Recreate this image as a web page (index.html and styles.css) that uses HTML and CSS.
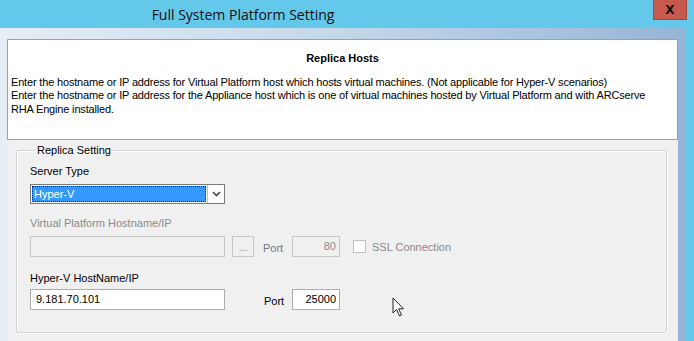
FILE: index.html
```html
<!DOCTYPE html>
<html lang="en">
<head>
    <meta charset="UTF-8">
    <title>Full System Platform Setting</title>
    <link rel="stylesheet" href="styles.css">
</head>
<body>
    <div class="window">
        <div class="titlebar">
            <div class="title">Full System Platform Setting</div>
            <div class="close">X</div>
        </div>
        <div class="frame">
            <div class="header">
                <div class="header-title">Replica Hosts</div>
                <p>Enter the hostname or IP address for Virtual Platform host which hosts virtual machines. (Not applicable for Hyper-V scenarios)</p>
                <p>Enter the hostname or IP address for the Appliance host which is one of virtual machines hosted by Virtual Platform and with ARCserve RHA Engine installed.</p>
            </div>
            <div class="content">
                <fieldset class="group">
                    <legend>Replica Setting</legend>
                    <div class="label first">Server Type</div>
                    <div class="combo">
                        <div class="combo-value"><span>Hyper-V</span></div>
                        <div class="combo-btn">
                            <svg width="9" height="6" viewBox="0 0 9 6"><path d="M1 1 L4.5 4.5 L8 1" fill="none" stroke="#444" stroke-width="1.6"/></svg>
                        </div>
                    </div>
                    <div class="label disabled">Virtual Platform Hostname/IP</div>
                    <div class="row">
                        <div class="textbox host disabled"></div>
                        <div class="browse">...</div>
                        <div class="port-label muted">Port</div>
                        <div class="textbox port disabled">80</div>
                        <div class="check"></div>
                        <div class="check-label disabled">SSL Connection</div>
                    </div>
                    <div class="label spaced">Hyper-V HostName/IP</div>
                    <div class="row tight">
                        <div class="textbox host">9.181.70.101</div>
                        <div class="port-label">Port</div>
                        <div class="textbox port">25000</div>
                    </div>
                </fieldset>
            </div>
        </div>
        <svg class="cursor" width="14" height="21" viewBox="0 0 14 21"><path d="M1 1 L1 16 L4.5 12.5 L7.5 19 L9.5 18 L6.7 11.8 L11.5 11.8 Z" fill="#fff" stroke="#222" stroke-width="1" stroke-linejoin="round"/></svg>
    </div>
</body>
</html>
```

FILE: styles.css
```css
* {
    margin: 0;
    padding: 0;
    box-sizing: border-box;
}
body {
    width: 694px;
    height: 341px;
    overflow: hidden;
    font-family: 'Liberation Sans', Arial, sans-serif;
    font-size: 11px;
    color: #000;
}
.window {
    position: relative;
    height: 341px;
    background: #63c8ea;
    display: flex;
    flex-direction: column;
}
.titlebar {
    height: 28px;
    display: flex;
    justify-content: center;
    align-items: center;
    position: relative;
}
.title {
    font-family: 'Open Sans', 'Noto Sans', sans-serif;
    font-size: 14px;
    color: #111;
    margin-left: -208px;
    padding-top: 1px;
}
.close {
    position: absolute;
    top: 0;
    right: 7px;
    width: 34px;
    height: 20px;
    background: #c75a4c;
    border: 1px solid #a84538;
    border-top: none;
    color: #111;
    font-family: 'DejaVu Sans', sans-serif;
    font-weight: bold;
    font-size: 12px;
    display: flex;
    justify-content: center;
    align-items: center;
}
.frame {
    flex: 1;
    margin-right: 8px;
    padding: 11px 8px 0 7px;
    background: linear-gradient(to right, #e6eef6, #c3d7e9 50%, #95b5d7);
    display: flex;
    flex-direction: column;
}
.header {
    background: #fff;
    border: 1px solid #a0a0a0;
    height: 101px;
    padding: 12px 28px 0 3px;
    line-height: 13.5px;
    letter-spacing: -0.17px;
}
.header-title {
    font-weight: bold;
    text-align: center;
    margin-bottom: 10px;
    margin-right: -25px;
    letter-spacing: 0;
}
.content {
    flex: 1;
    background: #f0f0f0;
    padding: 4px 11px 8px 9px;
}
.group {
    height: 100%;
    border: 1px solid #d5d5d5;
    box-shadow: inset 1px 1px 0 #fff, 1px 1px 0 #fff;
    border-radius: 2px;
    padding: 0 0 0 13px;
}
.group legend {
    margin-left: 5px;
    padding: 0 2px;
    font-size: 11px;
}
.label {
    margin-top: 13px;
    height: 14px;
}
.label.first {
    margin-top: 9px;
}
.label.spaced {
    margin-top: 15px;
}
.disabled {
    color: #8a8a8a;
}
.muted {
    color: #6e7a88;
}
.combo {
    margin-top: 5px;
    width: 195px;
    height: 20px;
    border: 1px solid #7a7a7a;
    display: flex;
    background: #fff;
}
.combo-value {
    flex: 1;
    padding: 1px;
}
.combo-value span {
    display: block;
    height: 100%;
    background: #3399ff;
    color: #fff;
    border: 1px dotted #222;
    padding-left: 1px;
    line-height: 15px;
}
.combo-btn {
    width: 17px;
    border-left: 1px solid #bdbdbd;
    display: flex;
    justify-content: center;
    align-items: center;
}
.row {
    margin-top: 5px;
    display: flex;
    align-items: center;
    height: 21px;
}
.row.tight {
    margin-top: 3px;
}
.textbox {
    height: 21px;
    border: 1px solid #adadad;
    background: #fff;
    padding: 3px 5px;
    line-height: 13px;
}
.textbox.disabled {
    background: #f0f0f0;
    border-color: #c8c8c8;
}
.host {
    width: 195px;
}
.browse {
    width: 22px;
    height: 21px;
    margin-left: 7px;
    border: 1px solid #c8c8c8;
    color: #8a8a8a;
    text-align: center;
    line-height: 22px;
    font-size: 10px;
}
.port-label {
    margin-left: 9px;
    width: 29px;
    padding-top: 2px;
}
.row .host + .port-label {
    margin-left: 39px;
    width: 28px;
}
.port {
    width: 48px;
    text-align: right;
    padding-right: 3px;
}
.check {
    margin-left: 13px;
    width: 13px;
    height: 13px;
    border: 1px solid #c0c0c0;
    background: #fff;
}
.check-label {
    margin-left: 6px;
}
.cursor {
    position: absolute;
    left: 392px;
    top: 297px;
}
```
